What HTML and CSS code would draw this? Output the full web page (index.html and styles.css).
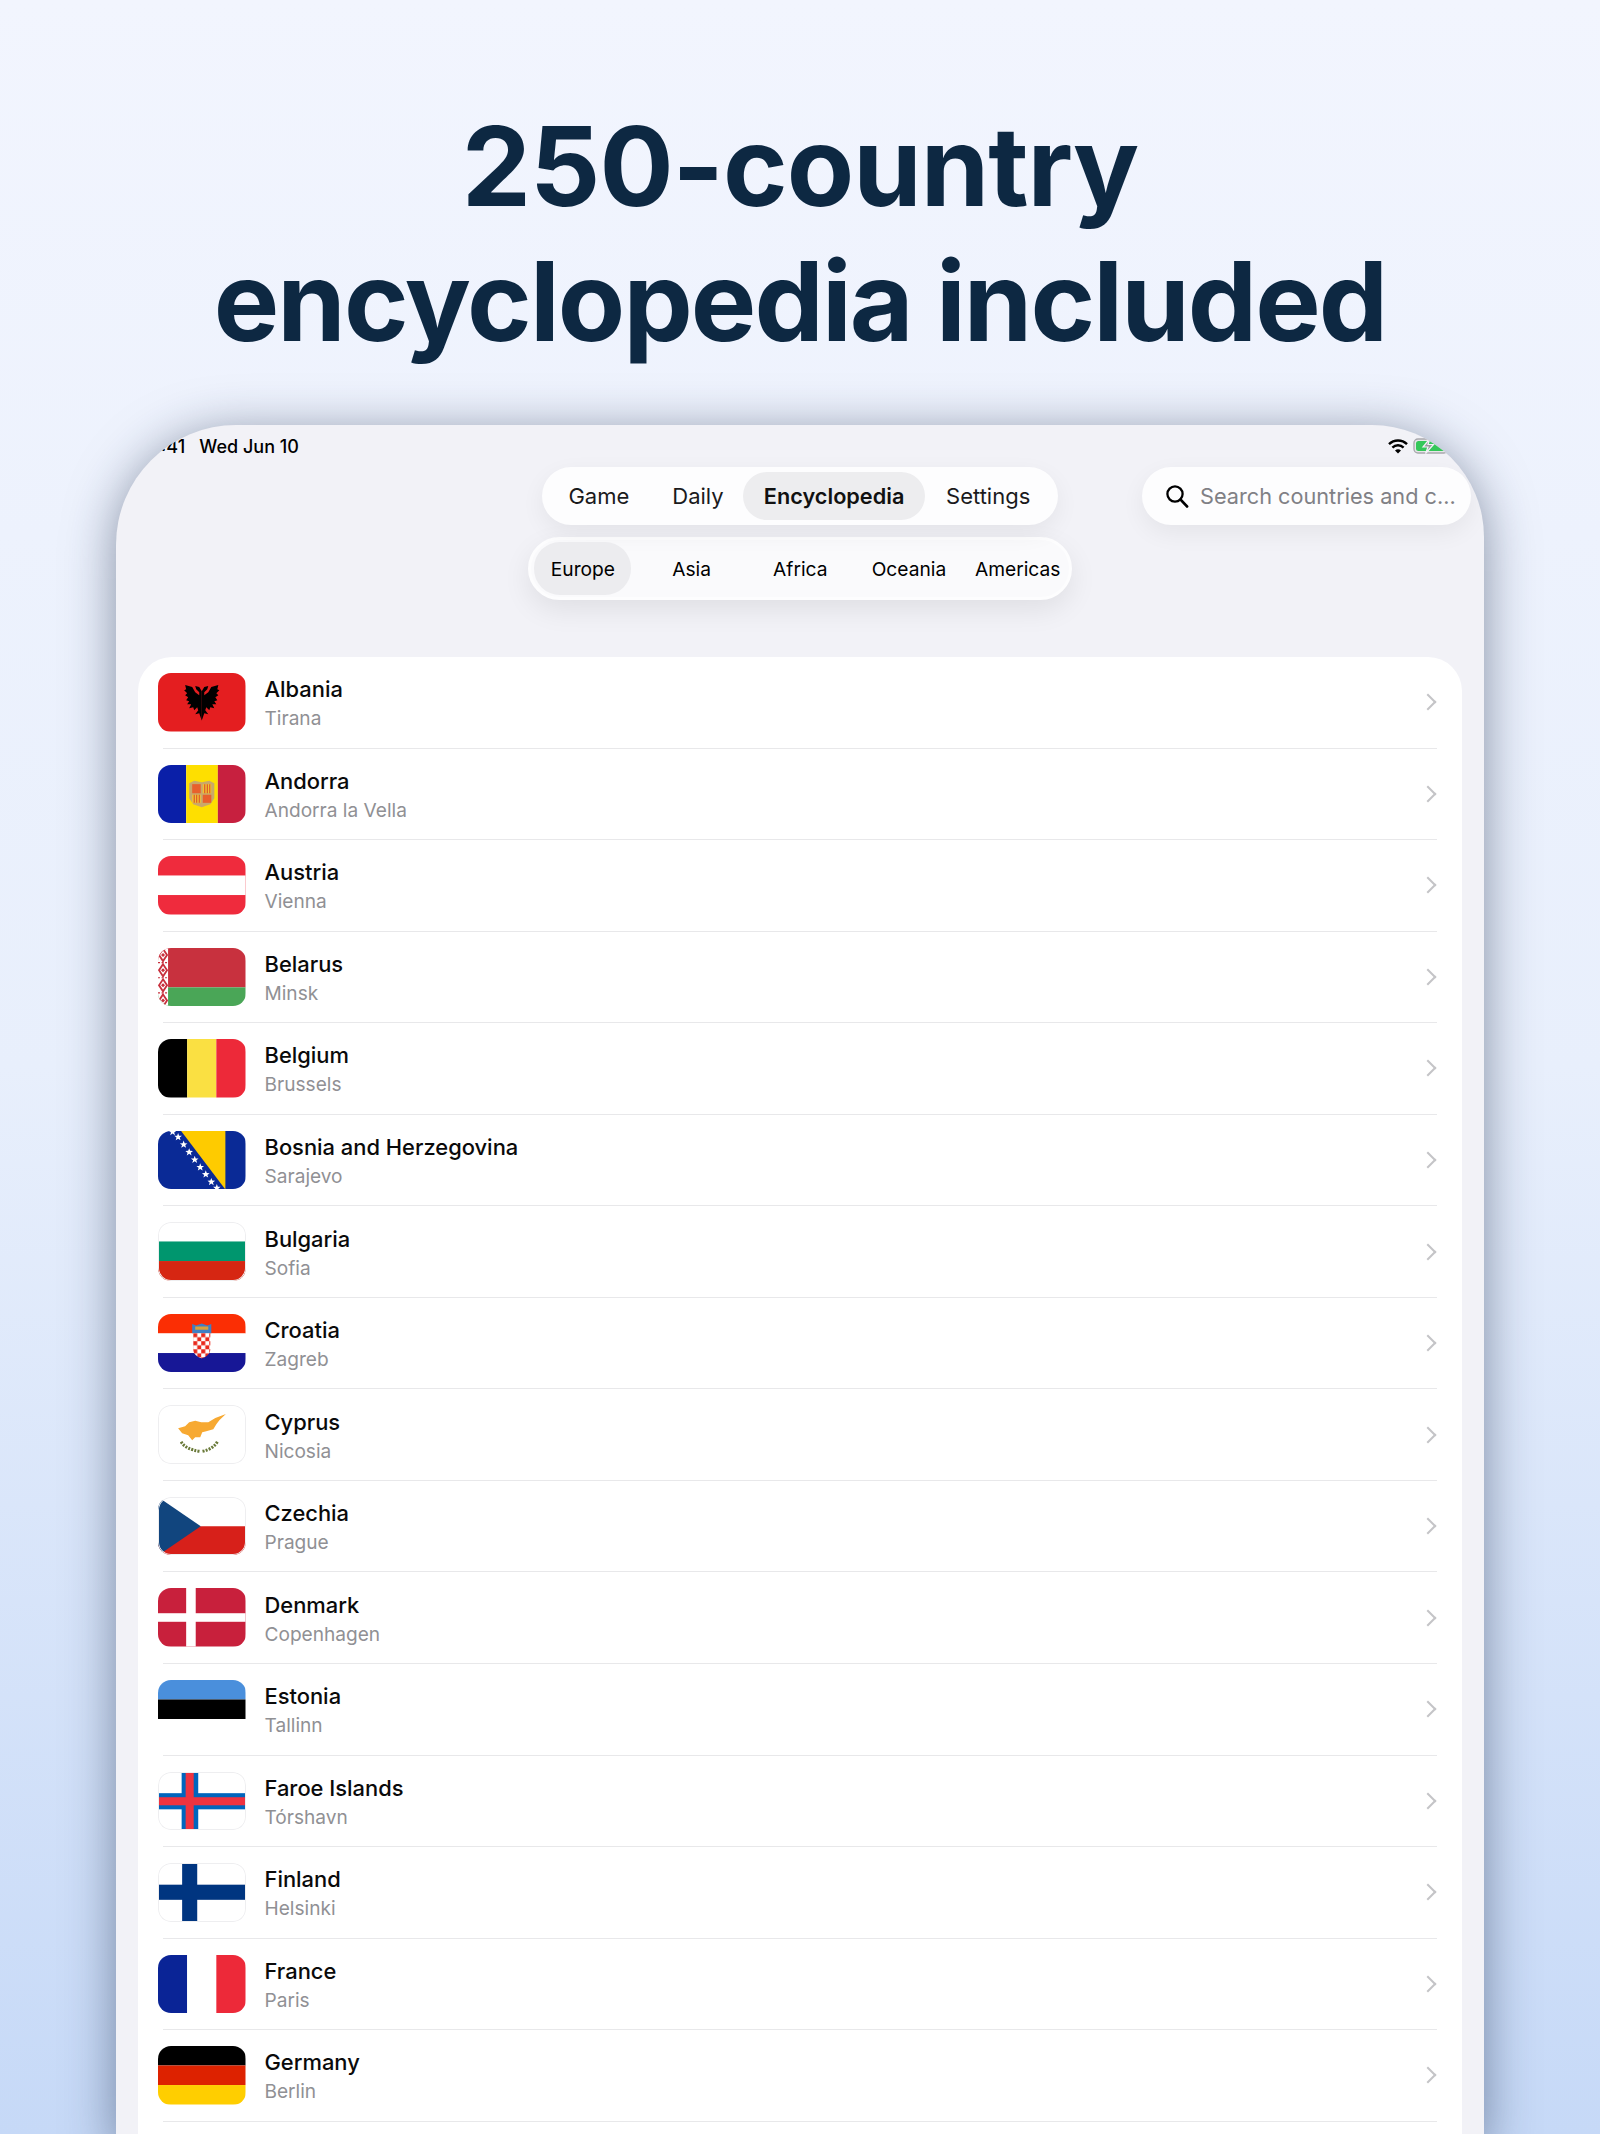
FILE: index.html
```html
<!DOCTYPE html>
<html lang="en">
  <head>
    <meta charset="UTF-8" />
    <meta name="viewport" content="width=device-width, initial-scale=1.0" />
    <title>250-country encyclopedia included</title>
    <link rel="stylesheet" href="styles.css">
  </head>
  <body>
    <h1 class="headline"><span class="headline-top">250-country</span><br />encyclopedia included</h1>

    <div class="tablet">
      <div class="statusbar">
        <div class="status-left"><span>9:41</span><span>Wed Jun 10</span></div>
        <div class="status-right">
          <svg width="20" height="15" viewBox="0 0 20 15">
            <path d="M1 5.2a12.8 12.8 0 0 1 18 0" fill="none" stroke="#000" stroke-width="2.4" />
            <path d="M4.4 8.6a8 8 0 0 1 11.2 0" fill="none" stroke="#000" stroke-width="2.4" />
            <path d="M10 14.6l-3-3a4.3 4.3 0 0 1 6 0z" fill="#000" />
          </svg>
          <svg width="40" height="16" viewBox="0 0 40 16">
            <rect x="1" y="1" width="34" height="14" rx="4" fill="#e6e6e8" stroke="#a9a9ad" stroke-width="1.4" />
            <rect x="3" y="3" width="30" height="10" rx="2.5" fill="#34c759" />
            <path d="M17 0.5l-7 8.5h5l-2.500 6.500 8-9h-5.500z" fill="#9a9a9e" stroke="#f2f2f7" stroke-width="1.2" />
          </svg>
        </div>
      </div>

      <div class="topnav">
        <div></div>
        <div class="tabs">
          <span class="tab">Game</span>
          <span class="tab">Daily</span>
          <span class="tab tab-on">Encyclopedia</span>
          <span class="tab">Settings</span>
        </div>
        <div class="search">
          <svg width="24" height="24" viewBox="0 0 24 24">
            <circle cx="10" cy="10" r="7.6" fill="none" stroke="#000" stroke-width="2.3" />
            <path d="M15.6 15.6l6.4 6.8" fill="none" stroke="#000" stroke-width="2.8" stroke-linecap="round" />
          </svg>
          <span>Search countries and c...</span>
        </div>
      </div>

      <div class="regions">
        <span class="region region-on">Europe</span>
        <span class="region">Asia</span>
        <span class="region">Africa</span>
        <span class="region">Oceania</span>
        <span class="region">Americas</span>
      </div>

      <div class="list">
        <div class="row">
          <div class="flag">
            <svg viewBox="0 0 87 58" preserveAspectRatio="none">
              <rect width="87" height="58" fill="#e41e20" />
              <path id="eagle" d="M43.500 18L46 14l4-1-1 3-3 3v3l4-3 3-5 7-2-1 4 2 1-3 3 2 2-3 2 2 3-3 1 2 3h-4l2 4-4-1-1 3-3-3-1 3 3 4-4-1-1 3-1.500 4z" fill="#000" />
              <use href="#eagle" transform="matrix(-1 0 0 1 87 0)" />
            </svg>
          </div>
          <div class="names"><div class="name">Albania</div><div class="capital">Tirana</div></div>
          <span class="chev"></span>
        </div>

        <div class="row">
          <div class="flag">
            <svg viewBox="0 0 87 58" preserveAspectRatio="none">
              <rect width="28" height="58" fill="#0a1fa8" />
              <rect x="28" width="31.500" height="58" fill="#fedf00" />
              <rect x="59.500" width="27.500" height="58" fill="#c7203f" />
              <path d="M31 18l5-2.500 7.500 1.500 7.500-1.500 5 2.500v15l-4 6-8.500 3-8.500-3-4-6z" fill="#c9a86a" />
              <rect x="34" y="19" width="8.500" height="9" fill="#e8602c" />
              <rect x="44.500" y="19" width="8.500" height="9" fill="#f2c230" />
              <rect x="34" y="29.500" width="8.500" height="8" fill="#f2c230" />
              <rect x="44.500" y="29.500" width="8.500" height="8" fill="#e8602c" />
              <path d="M46.500 19v9M49 19v9M51.500 19v9M36 29.500v8M38.500 29.500v8M41 29.500v8" stroke="#d8452a" stroke-width="1" />
            </svg>
          </div>
          <div class="names"><div class="name">Andorra</div><div class="capital">Andorra la Vella</div></div>
          <span class="chev"></span>
        </div>

        <div class="row">
          <div class="flag">
            <svg viewBox="0 0 87 58" preserveAspectRatio="none">
              <rect width="87" height="58" fill="#ef2b3d" />
              <rect y="19.300" width="87" height="19.400" fill="#fff" />
            </svg>
          </div>
          <div class="names"><div class="name">Austria</div><div class="capital">Vienna</div></div>
          <span class="chev"></span>
        </div>

        <div class="row">
          <div class="flag">
            <svg viewBox="0 0 87 58" preserveAspectRatio="none">
              <rect width="87" height="39" fill="#c8313e" />
              <rect y="39" width="87" height="19" fill="#4aa657" />
              <rect width="10" height="58" fill="#fff" />
              <path d="M5 1l4 6-4 6-4-6zM5 16l4 6-4 6-4-6zM5 31l4 6-4 6-4-6zM5 46l4 6-4 6-4-6z" fill="none" stroke="#c8313e" stroke-width="1.800" />
              <path d="M5 5l2 2-2 2-2-2zM5 20l2 2-2 2-2-2zM5 35l2 2-2 2-2-2zM5 50l2 2-2 2-2-2z" fill="#c8313e" />
              <path d="M0 14.500h10M0 29.500h10M0 44.500h10" stroke="#c8313e" stroke-width="1.200" stroke-dasharray="2 1.500" />
            </svg>
          </div>
          <div class="names"><div class="name">Belarus</div><div class="capital">Minsk</div></div>
          <span class="chev"></span>
        </div>

        <div class="row">
          <div class="flag">
            <svg viewBox="0 0 87 58" preserveAspectRatio="none">
              <rect width="29" height="58" fill="#000" />
              <rect x="29" width="29" height="58" fill="#fae042" />
              <rect x="58" width="29" height="58" fill="#ed2939" />
            </svg>
          </div>
          <div class="names"><div class="name">Belgium</div><div class="capital">Brussels</div></div>
          <span class="chev"></span>
        </div>

        <div class="row">
          <div class="flag">
            <svg viewBox="0 0 87 58" preserveAspectRatio="none">
              <defs>
                <polygon id="star" points="0,-4 1,-1.300 3.800,-1.200 1.600,.5 2.400,3.200 0,1.600 -2.400,3.200 -1.600,.5 -3.800,-1.200 -1,-1.300" fill="#fff" />
              </defs>
              <rect width="87" height="58" fill="#0a2a96" />
              <path d="M23 0h44v58z" fill="#fecb00" />
              <use href="#star" x="14.500" y="1" />
              <use href="#star" x="20" y="6" />
              <use href="#star" x="25.500" y="13.500" />
              <use href="#star" x="31" y="21" />
              <use href="#star" x="36.500" y="28.500" />
              <use href="#star" x="42" y="36" />
              <use href="#star" x="47.500" y="43" />
              <use href="#star" x="53" y="50.500" />
              <use href="#star" x="58.500" y="56.500" />
            </svg>
          </div>
          <div class="names"><div class="name">Bosnia and Herzegovina</div><div class="capital">Sarajevo</div></div>
          <span class="chev"></span>
        </div>

        <div class="row">
          <div class="flag flag-light">
            <svg viewBox="0 0 87 58" preserveAspectRatio="none">
              <rect width="87" height="19.300" fill="#fff" />
              <rect y="19.300" width="87" height="19.400" fill="#00966e" />
              <rect y="38.700" width="87" height="19.300" fill="#d62612" />
            </svg>
          </div>
          <div class="names"><div class="name">Bulgaria</div><div class="capital">Sofia</div></div>
          <span class="chev"></span>
        </div>

        <div class="row">
          <div class="flag">
            <svg viewBox="0 0 87 58" preserveAspectRatio="none">
              <defs>
                <pattern id="checks" width="8" height="8" x="35" y="19" patternUnits="userSpaceOnUse">
                  <rect width="8" height="8" fill="#fff" />
                  <rect width="4" height="4" fill="#e8291c" />
                  <rect x="4" y="4" width="4" height="4" fill="#e8291c" />
                </pattern>
              </defs>
              <rect width="87" height="19.300" fill="#fb2e04" />
              <rect y="19.300" width="87" height="19.400" fill="#fff" />
              <rect y="38.700" width="87" height="19.300" fill="#171796" />
              <path d="M34 10l4 1.500 5.500-2 5.500 2 4-1.500v9H34z" fill="#3f7fc4" />
              <path d="M37 12.500h13v3H37z" fill="#d9a13b" />
              <path d="M35 19h17v16c0 5-4.500 8-8.500 9-4-1-8.500-4-8.500-9z" fill="url(#checks)" />
            </svg>
          </div>
          <div class="names"><div class="name">Croatia</div><div class="capital">Zagreb</div></div>
          <span class="chev"></span>
        </div>

        <div class="row">
          <div class="flag flag-light">
            <svg viewBox="0 0 87 58" preserveAspectRatio="none">
              <rect width="87" height="58" fill="#fff" />
              <path d="M20 23l7-2 4-4 6-1.500 6 1.500h7l7-4 10.500-4-6.500 6-3 4-3 5-7 2-4 1-2 5h-5l-3 3-4-5-6-2z" fill="#f7a932" />
              <path d="M23 36.500c3 5 9 8 19 9.500" fill="none" stroke="#6a7a3a" stroke-width="3" stroke-dasharray="2 1.200" />
              <path d="M59 36.500c-3 5-8 8-15 9.500" fill="none" stroke="#6a7a3a" stroke-width="3" stroke-dasharray="2 1.200" />
            </svg>
          </div>
          <div class="names"><div class="name">Cyprus</div><div class="capital">Nicosia</div></div>
          <span class="chev"></span>
        </div>

        <div class="row">
          <div class="flag flag-light">
            <svg viewBox="0 0 87 58" preserveAspectRatio="none">
              <rect width="87" height="29" fill="#fff" />
              <rect y="29" width="87" height="29" fill="#d7201a" />
              <path d="M0 0l42.500 29L0 58z" fill="#11457e" />
            </svg>
          </div>
          <div class="names"><div class="name">Czechia</div><div class="capital">Prague</div></div>
          <span class="chev"></span>
        </div>

        <div class="row">
          <div class="flag">
            <svg viewBox="0 0 87 58" preserveAspectRatio="none">
              <rect width="87" height="58" fill="#c8203c" />
              <rect x="28" width="9.500" height="58" fill="#fff" />
              <rect y="25" width="87" height="8.500" fill="#fff" />
            </svg>
          </div>
          <div class="names"><div class="name">Denmark</div><div class="capital">Copenhagen</div></div>
          <span class="chev"></span>
        </div>

        <div class="row">
          <div class="flag">
            <svg viewBox="0 0 87 58" preserveAspectRatio="none">
              <rect width="87" height="19.300" fill="#4a8fdc" />
              <rect y="19.300" width="87" height="19.400" fill="#000" />
              <rect y="38.700" width="87" height="19.300" fill="#fff" />
            </svg>
          </div>
          <div class="names"><div class="name">Estonia</div><div class="capital">Tallinn</div></div>
          <span class="chev"></span>
        </div>

        <div class="row">
          <div class="flag flag-light">
            <svg viewBox="0 0 87 58" preserveAspectRatio="none">
              <rect width="87" height="58" fill="#fff" />
              <rect x="23.500" width="16.500" height="58" fill="#0065bd" />
              <rect y="21" width="87" height="16" fill="#0065bd" />
              <rect x="27.500" width="8" height="58" fill="#ef3340" />
              <rect y="25" width="87" height="8" fill="#ef3340" />
            </svg>
          </div>
          <div class="names"><div class="name">Faroe Islands</div><div class="capital">Tórshavn</div></div>
          <span class="chev"></span>
        </div>

        <div class="row">
          <div class="flag flag-light">
            <svg viewBox="0 0 87 58" preserveAspectRatio="none">
              <rect width="87" height="58" fill="#fff" />
              <rect x="24" width="15" height="58" fill="#003580" />
              <rect y="21.500" width="87" height="15" fill="#003580" />
            </svg>
          </div>
          <div class="names"><div class="name">Finland</div><div class="capital">Helsinki</div></div>
          <span class="chev"></span>
        </div>

        <div class="row">
          <div class="flag">
            <svg viewBox="0 0 87 58" preserveAspectRatio="none">
              <rect width="29" height="58" fill="#0a2496" />
              <rect x="29" width="29" height="58" fill="#fff" />
              <rect x="58" width="29" height="58" fill="#ed2939" />
            </svg>
          </div>
          <div class="names"><div class="name">France</div><div class="capital">Paris</div></div>
          <span class="chev"></span>
        </div>

        <div class="row">
          <div class="flag">
            <svg viewBox="0 0 87 58" preserveAspectRatio="none">
              <rect width="87" height="19.300" fill="#000" />
              <rect y="19.300" width="87" height="19.400" fill="#dd2200" />
              <rect y="38.700" width="87" height="19.300" fill="#ffce00" />
            </svg>
          </div>
          <div class="names"><div class="name">Germany</div><div class="capital">Berlin</div></div>
          <span class="chev"></span>
        </div>
      </div>
    </div>
  </body>
</html>
```

FILE: styles.css
```css
html,
body {
  margin: 0;
  height: 2134px;
  overflow: hidden;
}

body {
  background: linear-gradient(180deg, #f2f5fe 0%, #e8effc 50%, #c6d9f7 100%);
  font-family: Inter, "Noto Sans", sans-serif;
  color: #000;
}

.headline {
  margin: 0;
  padding-top: 99px;
  height: 425px;
  box-sizing: border-box;
  text-align: center;
  font-size: 110px;
  line-height: 135px;
  font-weight: 700;
  letter-spacing: -1.9px;
  color: #0d2842;
}

.headline-top {
  letter-spacing: -1px;
}

.tablet {
  width: 1368px;
  height: 1720px;
  margin: 0 auto;
  background: #f2f2f7;
  border-radius: 120px 112px 0 0;
  box-shadow: 0 8px 50px rgba(30, 45, 75, 0.5);
  overflow: hidden;
}

.statusbar {
  height: 42px;
  padding: 0 31px 0 33.500px;
  display: flex;
  justify-content: space-between;
  align-items: center;
  font-size: 18px;
  font-weight: 500;
}

.status-left {
  display: flex;
  gap: 14.200px;
}

.status-right {
  display: flex;
  align-items: center;
  gap: 5px;
}

.topnav {
  display: grid;
  grid-template-columns: 1fr auto 1fr;
  align-items: start;
}

.tabs {
  display: flex;
  gap: 2px;
  padding: 5px 7.700px 5px 6.400px;
  height: 58px;
  box-sizing: border-box;
  background: #fdfdfe;
  border-radius: 29px;
  box-shadow: 0 8px 24px rgba(0, 0, 0, 0.06);
  font-size: 22px;
}

.tab {
  display: flex;
  align-items: center;
  padding: 0 20.500px;
  border-radius: 24px;
  color: #1a1a1c;
}

.tab-on {
  margin: 0 -1.300px 0 -2.800px;
  background: #ededef;
  font-size: 21.700px;
  font-weight: 600;
  color: #111;
}

.search {
  justify-self: end;
  margin-right: 13px;
  width: 329px;
  height: 58px;
  box-sizing: border-box;
  padding-left: 23px;
  display: flex;
  align-items: center;
  gap: 11px;
  background: #fdfdfe;
  border-radius: 29px;
  box-shadow: 0 8px 24px rgba(0, 0, 0, 0.06);
  font-size: 21.700px;
  color: #808085;
  white-space: nowrap;
}

.regions {
  width: 544px;
  height: 63px;
  box-sizing: border-box;
  margin: 12px auto 57px;
  padding: 2px 0 2px 3.400px;
  display: grid;
  grid-template-columns: repeat(5, 97px);
  gap: 11.7px;
  background: #fafafc;
  border: 3px solid #fdfdfe;
  border-radius: 32px;
  box-shadow: 0 10px 28px rgba(0, 0, 0, 0.08);
  font-size: 19.200px;
}

.region {
  display: flex;
  align-items: center;
  justify-content: center;
  border-radius: 26px;
}

.region-on {
  background: #ececef;
}

.list {
  margin: 0 22px;
  background: #fff;
  border-radius: 34px 34px 0 0;
  height: 1500px;
}

.row {
  height: 91.55px;
  box-sizing: border-box;
  margin: 0 25px;
  padding-right: 3.500px;
  display: flex;
  align-items: center;
  border-bottom: 1.5px solid #e8e8ea;
}

.flag {
  position: relative;
  flex: none;
  width: 87.500px;
  height: 58.500px;
  margin-left: -5px;
  margin-right: 19px;
  border-radius: 13px;
  overflow: hidden;
}

.flag svg {
  display: block;
  width: 100%;
  height: 100%;
}

.flag-light::after {
  content: "";
  position: absolute;
  inset: 0;
  border-radius: 13px;
  box-shadow: inset 0 0 0 1px #eeeef0;
}

.names {
  flex: 1;
  padding-top: 3px;
}

.name {
  font-size: 21.900px;
  line-height: 29px;
  font-weight: 500;
  color: #0a0a0a;
}

.capital {
  font-size: 19.100px;
  line-height: 28px;
  color: #909094;
}

.chev {
  width: 12px;
  height: 12px;
  box-sizing: border-box;
  border-top: 2.500px solid #c4c4c7;
  border-right: 2.500px solid #c4c4c7;
  transform: rotate(45deg);
}
```
